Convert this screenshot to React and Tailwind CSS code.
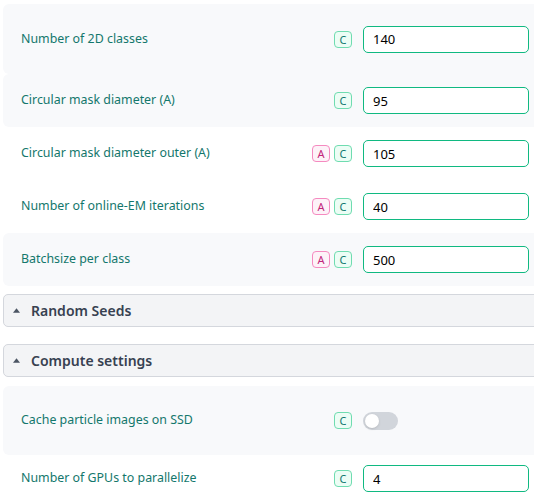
import React, { useState } from 'react';

const Badge = ({ kind }) => {
  if (kind === 'A') {
    return (
      <span className="flex h-[17px] w-[18px] items-center justify-center rounded-[4px] border border-[#f58ac0] bg-[#fdf2f8] text-[11px] leading-none text-[#c0267a]">
        A
      </span>
    );
  }
  return (
    <span className="flex h-[17px] w-[18px] items-center justify-center rounded-[4px] border border-[#6fdcb0] bg-[#ecfdf5] text-[11px] leading-none text-[#0f766e]">
      C
    </span>
  );
};

const FieldRow = ({ label, value, badges, gray, height, toggle }) => {
  const [val, setVal] = useState(value);
  return (
    <div className={`flex items-center rounded-md pl-[18px] ${gray ? 'bg-[#f8f9fb]' : 'bg-white'} ${height}`}>
      <div className="flex-1 text-[12.4px] text-[#13776c]">{label}</div>
      <div className="flex w-[40px] justify-end gap-1">
        {badges.map(b => <Badge key={b} kind={b} />)}
      </div>
      <div className="ml-[11px] w-[200px] pr-[34px]">
        {toggle ? (
          <div className="flex h-[18px] w-[35px] items-center rounded-full bg-[#d1d5db] px-[2px]">
            <div className="h-[14px] w-[14px] rounded-full bg-white shadow-sm" />
          </div>
        ) : (
          <input
            value={val}
            onChange={e => setVal(e.target.value)}
            className="h-[27px] w-[166px] rounded-[5px] border border-[#10b981] bg-white px-[9px] text-[13px] text-black outline-none"
          />
        )}
      </div>
    </div>
  );
};

const SectionHeader = ({ title, className }) => (
  <div className={`flex h-[33px] items-center rounded-[5px] border border-[#d4d7dd] bg-[#f3f4f6] pl-[9px] ${className}`}>
    <svg width="7" height="5" viewBox="0 0 8 5" className="mr-[11px]">
      <path d="M0 5 L4 0 L8 5 Z" fill="#4b5563" />
    </svg>
    <span className="text-[14px] font-semibold text-[#374151]">{title}</span>
  </div>
);

const App = () => {
  return (
    <div className="h-[503px] w-full overflow-hidden bg-white" style={{ fontFamily: '"Noto Sans", "Open Sans", sans-serif' }}>
      <div className="ml-[3px] w-[560px] pt-1">
        <FieldRow label="Number of 2D classes" value="140" badges={['C']} gray height="h-[70px]" />
        <FieldRow label="Circular mask diameter (A)" value="95" badges={['C']} gray height="h-[53px]" />
        <FieldRow label="Circular mask diameter outer (A)" value="105" badges={['A', 'C']} height="h-[53px]" />
        <FieldRow label="Number of online-EM iterations" value="40" badges={['A', 'C']} height="h-[53px]" />
        <FieldRow label="Batchsize per class" value="500" badges={['A', 'C']} gray height="h-[53px]" />

        <SectionHeader title="Random Seeds" className="mt-[8px]" />
        <SectionHeader title="Compute settings" className="mt-[17px]" />

        <div className="mt-[9px]">
          <FieldRow label="Cache particle images on SSD" badges={['C']} gray toggle height="h-[69px]" />
          <FieldRow label="Number of GPUs to parallelize" value="4" badges={['C']} height="h-[47px]" />
        </div>
      </div>
    </div>
  );
};

export default App;
